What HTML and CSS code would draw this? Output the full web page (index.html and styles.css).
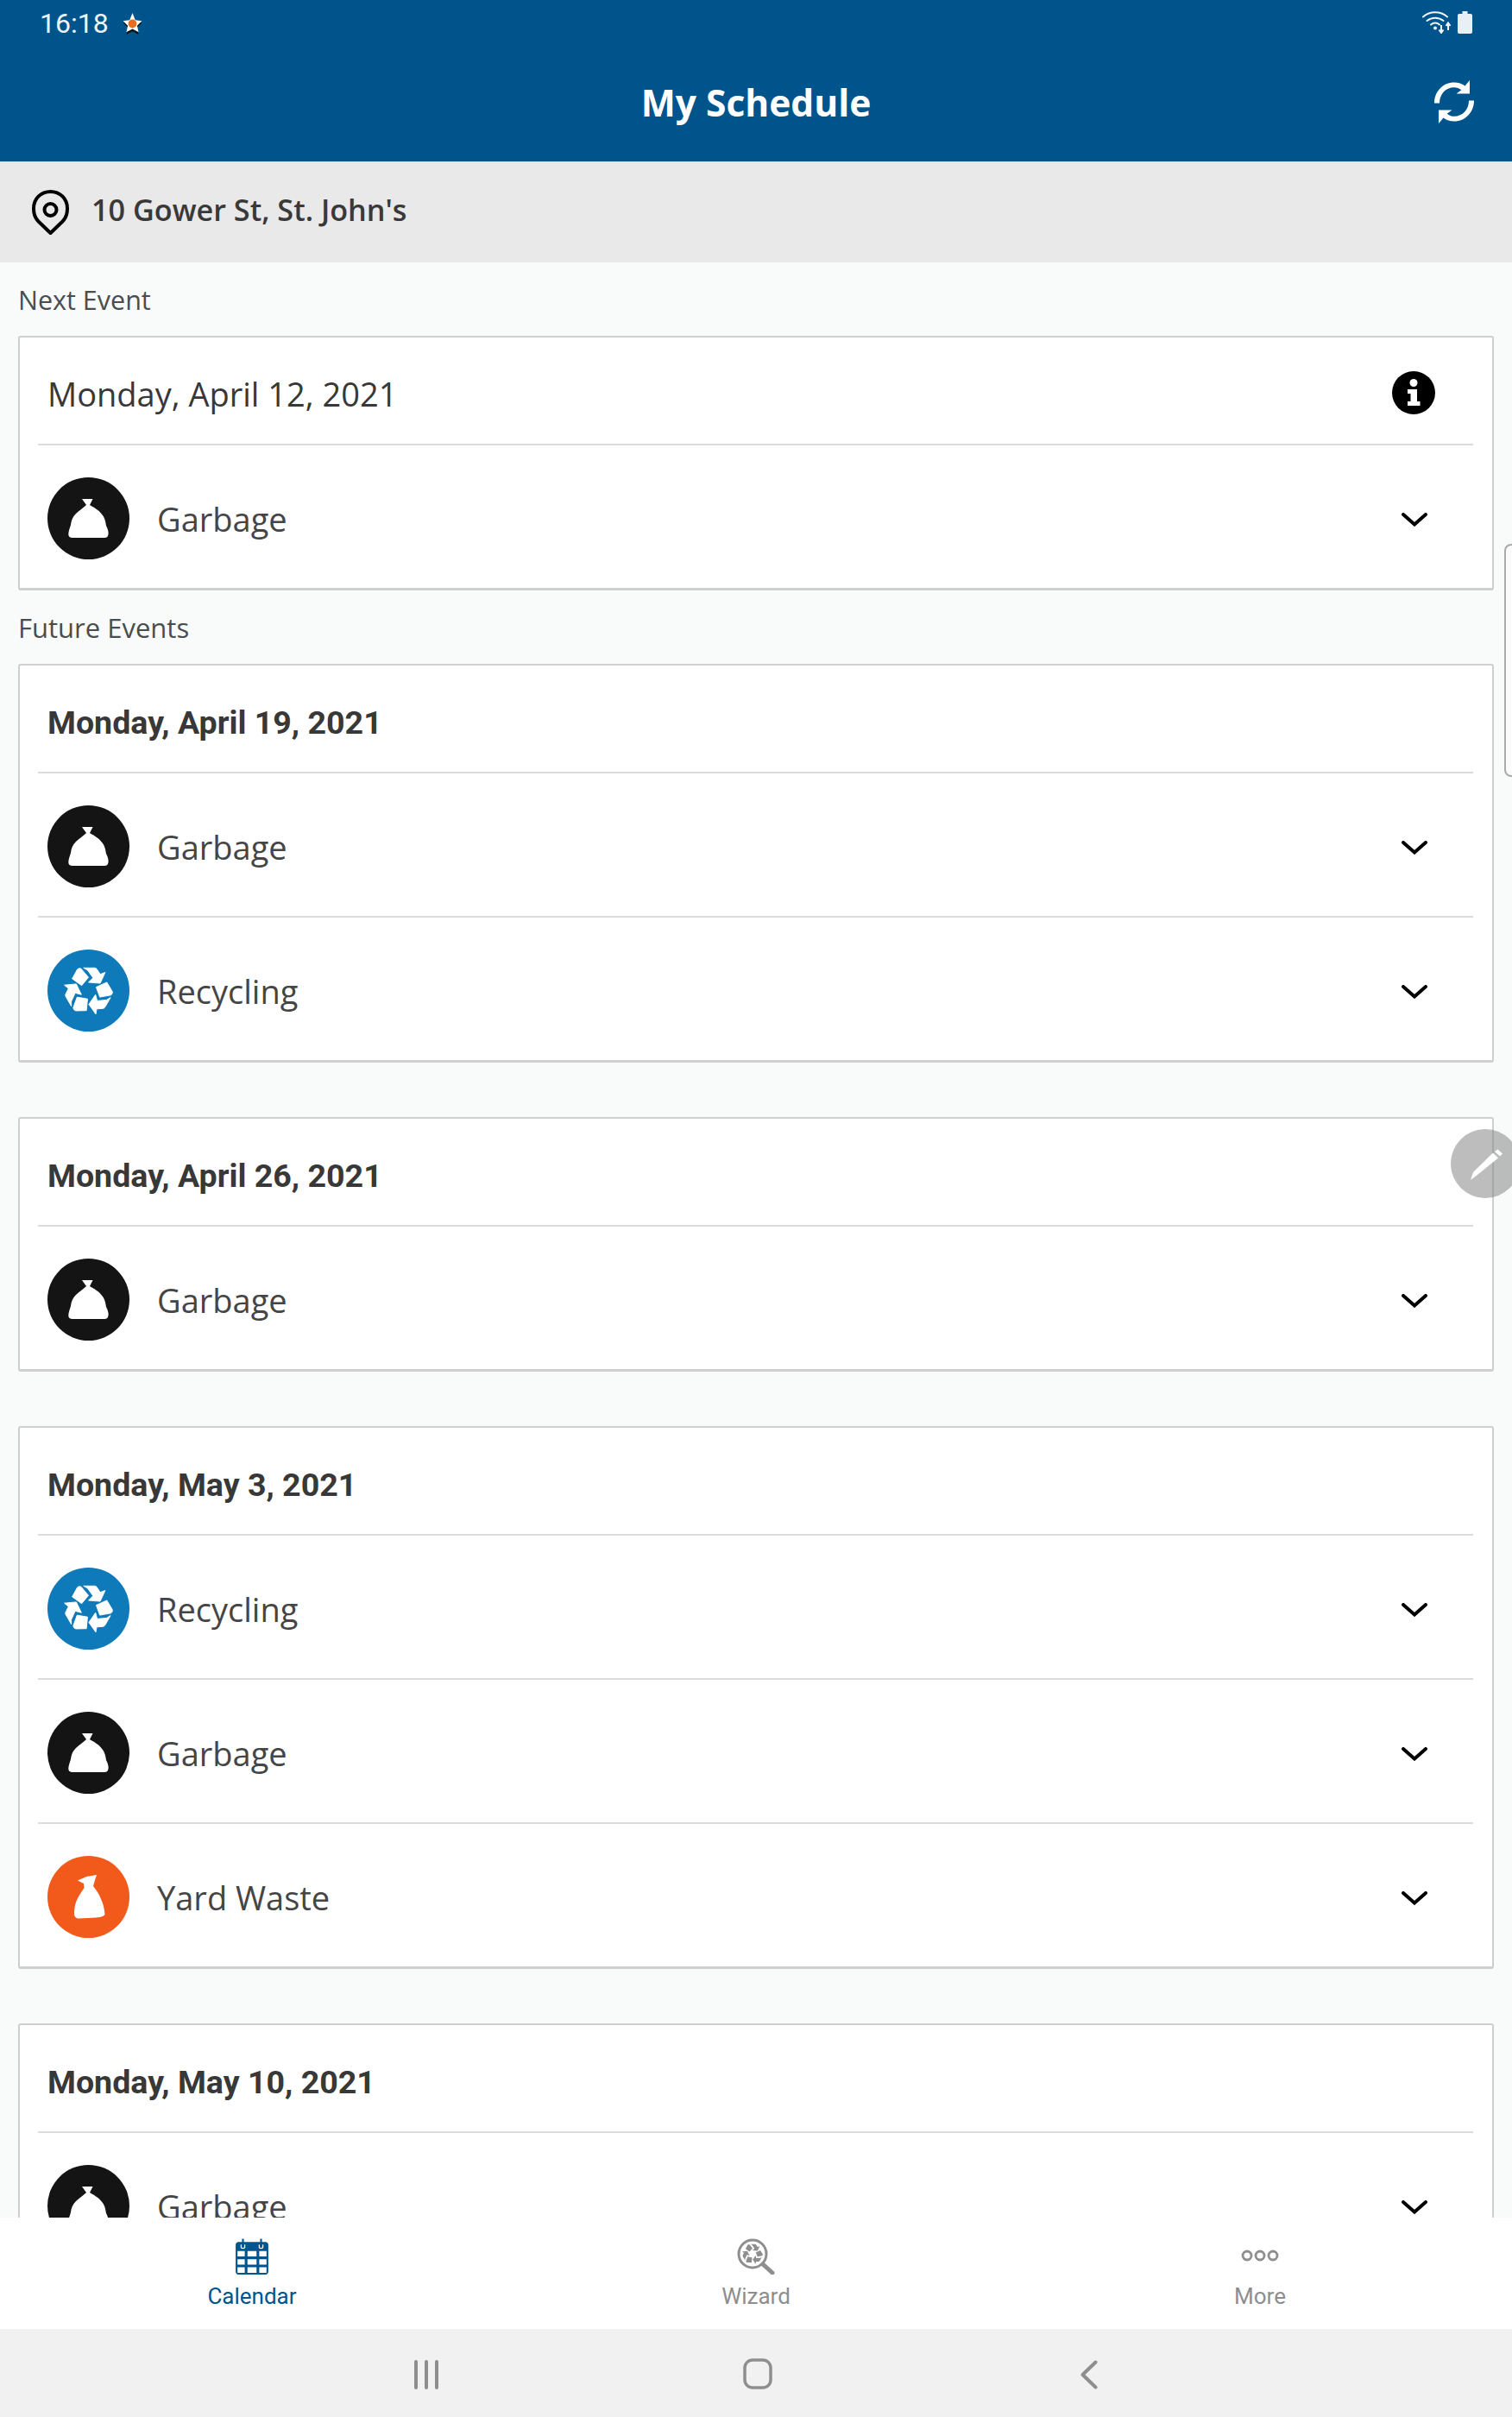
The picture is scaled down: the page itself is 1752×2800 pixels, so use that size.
FILE: index.html
```html
<!DOCTYPE html>
<html lang="en">
<head>
<meta charset="utf-8">
<title>My Schedule</title>
<link rel="stylesheet" href="styles.css">
</head>
<body>
<svg class="defs" width="0" height="0" aria-hidden="true">
  <defs>
    <symbol id="bag" viewBox="0 0 95 95">
      <circle cx="47.5" cy="47.5" r="47.5" fill="#141414"/>
      <path fill="#fff" d="M40 25H52.500L49 32C54 35 60 38 64 44C67 48 67.500 53 68 56C70 60 71 63 70.500 66C70 69 68.500 70 66 70H29C26 70 24.300 68.500 24.300 66C24.300 62 26 59 27 55C27.500 50 29 46 33 42C37 38 42 35 45 32Z"/>
    </symbol>
    <symbol id="yard" viewBox="0 0 95 95">
      <circle cx="47.5" cy="47.5" r="47.5" fill="#f15a1b"/>
      <path fill="#fff" d="M35 28.500L45 24L57 22L55 28L53 35C56 39 60 44 62 50C65 56 66 62 66.500 68C64 71 60 71 56 71.500L36 72.500C33 72.500 31 70 31 67C31 60 32 55 35 49C37 45 40 41 42.500 37L42 32Z"/>
    </symbol>
    <g id="arrow">
      <path d="M29.500 34.500L35 24.500C36 23 38 22.700 39.500 23.500L47.500 33L40 42Z"/>
      <path d="M42 22.500H54C55.500 22.500 56.500 23.200 57.200 24.500L60.500 29.500L66 27.500L60.500 39.500L47.500 38.500L52.500 33.500L46.500 25Z"/>
    </g>
    <symbol id="recycle" viewBox="0 0 95 95">
      <circle cx="47.5" cy="47.5" r="47.5" fill="#0f7ab9"/>
      <g fill="#fff" stroke="#fff" stroke-width="0.800" transform="translate(47.500 47.500) scale(1.050) translate(-47.500 -47.500)">
        <use href="#arrow"/>
        <use href="#arrow" transform="rotate(120 47.5 47.5)"/>
        <use href="#arrow" transform="rotate(240 47.5 47.5)"/>
      </g>
    </symbol>
    <symbol id="chevron" viewBox="0 0 30 16">
      <path d="M2 2L15 13.500L28 2" fill="none" stroke="#000" stroke-width="4" stroke-linecap="round" stroke-linejoin="miter"/>
    </symbol>
  </defs>
</svg>

<div class="app">
  <header class="appbar">
    <div class="status">
      <div class="status-left">
        <span class="clock">16:18</span>
        <svg class="star" viewBox="0 0 20 23">
          <path fill="#111" d="M10 3L13 9.500L20 10.500L15 15.500L16.500 23L10 19.500L3.500 23L5 15.500L0 10.500L7 9.500Z"/>
          <path fill="#fff" d="M10 0L13 7.500L20 8.500L15 13.500L16.500 20.500L10 17L3.500 20.500L5 13.500L0 8.500L7 7.500Z"/>
          <circle cx="10" cy="11.500" r="4.500" fill="#e8701d"/>
        </svg>
      </div>
      <div class="status-right">
        <svg class="wifi" viewBox="0 0 34 26">
          <g fill="none" stroke="#eef4f8" stroke-width="2" stroke-linecap="round">
            <path d="M1 6.500C9 -0.500 21 -0.500 29 6.500"/>
            <path d="M5.500 11C11 6.500 19 6.500 24.500 11"/>
            <path d="M10 15.500C13 13 17 13 20 15.500"/>
          </g>
          <circle cx="15" cy="19.500" r="2" fill="#eef4f8"/>
          <path d="M22 16V24M19.500 21.500L22 25L24.500 21.500M30 22V14M27.500 17L30 13.500L32.500 17" fill="none" stroke="#eef4f8" stroke-width="2"/>
        </svg>
        <svg class="battery" viewBox="0 0 17 26">
          <path fill="#e8f0f6" d="M5.500 0H11.500V3H15C16.200 3 17 3.800 17 5V24C17 25.200 16.200 26 15 26H2C0.800 26 0 25.200 0 24V5C0 3.800 0.800 3 2 3H5.500Z"/>
        </svg>
      </div>
    </div>
    <div class="titlebar">
      <h1 class="title">My Schedule</h1>
      <svg class="refresh" viewBox="0 0 48 52">
        <path fill="#fff" d="M1 27.500C1 14 11 3.500 24 3.500C29 3.500 33 5 36.500 7.500L42 1V16.500H26.500L32.300 12.300C30 10.300 27 9.200 24 9.200C14 9.200 7 17.300 7 27.500Z"/>
        <path fill="#fff" d="M47 24.500C47 38 37 48.500 24 48.500C19 48.500 15 47 11.500 44.500L6 51V35.500H21.500L15.700 39.700C18 41.700 21 42.800 24 42.800C34 42.800 41 34.700 41 24.500Z"/>
      </svg>
    </div>
  </header>

  <div class="address">
    <svg class="pin" viewBox="0 0 43 52">
      <path d="M21.500 50L7.500 36.500C3.500 32.500 2 28 2 21.500C2 10 10.500 2 21.500 2C32.500 2 41 10 41 21.500C41 28 39.500 32.500 35.500 36.500Z" fill="none" stroke="#000" stroke-width="4" stroke-linejoin="round"/>
      <circle cx="21.500" cy="23" r="7" fill="none" stroke="#000" stroke-width="4"/>
    </svg>
    <span class="address-text">10 Gower St, St. John's</span>
  </div>

  <main class="content">
    <p class="section-label">Next Event</p>
    <section class="card card-next">
      <div class="card-head">
        <h2 class="date date-next">Monday, April 12, 2021</h2>
        <svg class="info" viewBox="0 0 50 50">
          <circle cx="25" cy="25" r="25" fill="#000"/>
          <circle cx="25" cy="13.500" r="4.500" fill="#fff"/>
          <path fill="#fff" d="M18 21H29V35H32.500V40H18V35H21.500V26H18Z"/>
        </svg>
      </div>
      <div class="row"><svg class="badge"><use href="#bag"/></svg><span class="row-label">Garbage</span><svg class="chev"><use href="#chevron"/></svg></div>
    </section>

    <p class="section-label section-label-future">Future Events</p>
    <section class="card">
      <div class="card-head"><h2 class="date">Monday, April 19, 2021</h2></div>
      <div class="row"><svg class="badge"><use href="#bag"/></svg><span class="row-label">Garbage</span><svg class="chev"><use href="#chevron"/></svg></div>
      <div class="row"><svg class="badge"><use href="#recycle"/></svg><span class="row-label">Recycling</span><svg class="chev"><use href="#chevron"/></svg></div>
    </section>
    <section class="card">
      <div class="card-head"><h2 class="date">Monday, April 26, 2021</h2></div>
      <div class="row"><svg class="badge"><use href="#bag"/></svg><span class="row-label">Garbage</span><svg class="chev"><use href="#chevron"/></svg></div>
    </section>
    <section class="card">
      <div class="card-head"><h2 class="date">Monday, May 3, 2021</h2></div>
      <div class="row"><svg class="badge"><use href="#recycle"/></svg><span class="row-label">Recycling</span><svg class="chev"><use href="#chevron"/></svg></div>
      <div class="row"><svg class="badge"><use href="#bag"/></svg><span class="row-label">Garbage</span><svg class="chev"><use href="#chevron"/></svg></div>
      <div class="row"><svg class="badge"><use href="#yard"/></svg><span class="row-label">Yard Waste</span><svg class="chev"><use href="#chevron"/></svg></div>
    </section>
    <section class="card">
      <div class="card-head"><h2 class="date">Monday, May 10, 2021</h2></div>
      <div class="row"><svg class="badge"><use href="#bag"/></svg><span class="row-label">Garbage</span><svg class="chev"><use href="#chevron"/></svg></div>
    </section>
  </main>

  <nav class="tabs">
    <div class="tab tab-active">
      <svg class="tab-icon" viewBox="0 0 36 40">
        <path fill="#00558e" d="M3 4H7V0.500H9V4H27V0.500H29V4H33C34.700 4 36 5.300 36 7V37C36 38.700 34.700 40 33 40H3C1.300 40 0 38.700 0 37V7C0 5.300 1.300 4 3 4Z"/>
        <path fill="none" stroke="#fff" stroke-width="1.200" d="M6 7V9.500C6 11.500 10 11.500 10 9.500V7M26 7V9.500C26 11.500 30 11.500 30 9.500V7"/>
        <path fill="#fff" d="M2 14H10V20H2ZM13 14H23V20H13ZM26 14H34V20H26ZM2 23H10V29H2ZM13 23H23V29H13ZM26 23H34V29H26ZM2 32H10V38H2ZM13 32H23V38H13ZM26 32H34V38H26Z"/>
      </svg>
      <span class="tab-label">Calendar</span>
    </div>
    <div class="tab">
      <svg class="tab-icon" viewBox="0 0 44 42">
        <circle cx="18" cy="18" r="16" fill="none" stroke="#8e8e8e" stroke-width="3"/>
        <path d="M30 30L41 40" stroke="#8e8e8e" stroke-width="5" stroke-linecap="round"/>
        <g fill="#8e8e8e" transform="translate(-3.400 -3.400) scale(0.450)">
          <use href="#arrow"/>
          <use href="#arrow" transform="rotate(120 47.5 47.5)"/>
          <use href="#arrow" transform="rotate(240 47.5 47.5)"/>
        </g>
      </svg>
      <span class="tab-label">Wizard</span>
    </div>
    <div class="tab">
      <svg class="tab-icon" viewBox="0 0 44 42">
        <g fill="none" stroke="#8e8e8e" stroke-width="2.800">
          <circle cx="7" cy="20" r="5"/>
          <circle cx="22" cy="20" r="5"/>
          <circle cx="37" cy="20" r="5"/>
        </g>
      </svg>
      <span class="tab-label">More</span>
    </div>
  </nav>

  <div class="sysnav">
    <svg class="sys-icon sys-recent" viewBox="0 0 30 34">
      <path d="M3 2V32M15 2V32M27 2V32" stroke="#8e8e8e" stroke-width="4" stroke-linecap="round"/>
    </svg>
    <svg class="sys-icon sys-home" viewBox="0 0 34 36">
      <rect x="2" y="2" width="30" height="32" rx="9" fill="none" stroke="#8e8e8e" stroke-width="3.500"/>
    </svg>
    <svg class="sys-icon sys-back" viewBox="0 0 20 34">
      <path d="M17.500 2.500L2.500 17L17.500 31.500" fill="none" stroke="#8e8e8e" stroke-width="4" stroke-linecap="round" stroke-linejoin="round"/>
    </svg>
  </div>

  <div class="scroll-tab"></div>
  <div class="fab">
    <svg class="pencil" viewBox="0 0 38 39">
      <path fill="#fff" d="M27 6.500L33 12.500L9 32L1 38L4 29Z"/>
      <path fill="#fff" d="M29 5L32.500 2.500L38 7.500L35 10.500Z"/>
    </svg>
  </div>
</div>
</body>
</html>
```
FILE: styles.css
```css
* { box-sizing: border-box; }
html, body { margin: 0; padding: 0; }
body { font-family: "Open Sans", "Liberation Sans", sans-serif; background: #f9fafa; }
.defs { position: absolute; }
.app { position: relative; width: 1752px; height: 2800px; display: flex; flex-direction: column; overflow: hidden; }

.appbar { flex: none; height: 188px; background: #00548c; border-bottom: 1px solid #cfe2ee; color: #fff; }
.status { height: 54px; padding: 13px 46px 0 46px; display: flex; justify-content: space-between; align-items: flex-start; }
.status-left { display: flex; align-items: center; gap: 16px; height: 28px; }
.clock { font-family: Roboto, sans-serif; font-size: 32px; line-height: 28px; color: #f0f5f9; }
.star { width: 23px; height: 25px; }
.status-right { display: flex; gap: 7px; }
.wifi { width: 34px; height: 26px; }
.battery { width: 17px; height: 26px; }
.titlebar { position: relative; height: 133px; display: flex; align-items: center; justify-content: center; }
.title { margin: 0 0 4px; font-size: 42.500px; font-weight: 700; line-height: 56px; }
.refresh { position: absolute; right: 43px; top: 38px; width: 48px; height: 52px; }

.address { flex: none; height: 116px; background: #e9e9e9; padding: 0 0 0 37px; display: flex; align-items: center; gap: 26px; }
.pin { width: 43px; height: 52px; }
.address-text { font-size: 34.200px; font-weight: 550; color: #393939; line-height: 48px; margin-bottom: 6px; }

.content { flex: 1; min-height: 0; overflow: hidden; padding: 0 21px; }
.section-label { margin: 0; height: 85px; padding-top: 21px; font-size: 30.500px; line-height: 44px; color: #4a4d4d; }
.section-label-future { height: 85px; padding-top: 21px; font-size: 31px; }

.card { background: #fff; border: 2px solid #cfcfcf; border-bottom-width: 3px; border-radius: 3px; padding: 0 22px 0 21px; margin-bottom: 63px; }
.card-next { margin-bottom: 0; }
.card-head { position: relative; height: 122px; display: flex; align-items: center; margin-bottom: 1px; }
.date { margin: 0; font-family: Roboto, sans-serif; font-size: 37.600px; font-weight: 700; color: #383838; line-height: 50px; padding-left: 11px; position: relative; top: 5px; }
.date-next { font-family: "Open Sans", sans-serif; font-weight: 500; font-size: 38px; top: 4px; }
.info { position: absolute; left: 1569px; top: 39px; width: 50px; height: 50px; }
.row { height: 167px; border-top: 2px solid #dcdcdc; padding: 4px 0 0 11px; display: flex; align-items: center; }
.badge { flex: none; width: 95px; height: 95px; }
.row-label { margin-left: 32px; font-size: 38px; line-height: 52px; color: #454545; }
.chev { flex: none; width: 30px; height: 16px; margin-left: auto; margin-right: 53px; margin-top: 2px; }

.tabs { flex: none; height: 129px; background: #fff; display: grid; grid-template-columns: repeat(3, 1fr); }
.tab { display: flex; flex-direction: column; align-items: center; padding-top: 24px; color: #8e8e8e; }
.tab-active { color: #00558e; }
.tab-icon { width: 44px; height: 42px; }
.tab-label { margin-top: 10px; font-family: Roboto, sans-serif; font-size: 26px; line-height: 30px; }

.sysnav { flex: none; height: 102px; background: #f1f1f1; display: flex; align-items: center; position: relative; }
.sys-icon { position: absolute; }
.sys-recent { left: 479px; top: 36px; width: 30px; height: 34px; }
.sys-home { left: 861px; top: 34px; width: 34px; height: 36px; }
.sys-back { left: 1252px; top: 36px; width: 20px; height: 34px; }

.scroll-tab { position: absolute; left: 1743px; top: 630px; width: 20px; height: 270px; border: 2px solid #aaa; border-radius: 8px; background: #fbfbfb; }
.fab { position: absolute; left: 1681px; top: 1308px; width: 80px; height: 80px; border-radius: 50%; background: rgba(128,128,128,.52); display: flex; align-items: center; justify-content: flex-start; padding-left: 22px; }
.pencil { width: 38px; height: 39px; }
```
